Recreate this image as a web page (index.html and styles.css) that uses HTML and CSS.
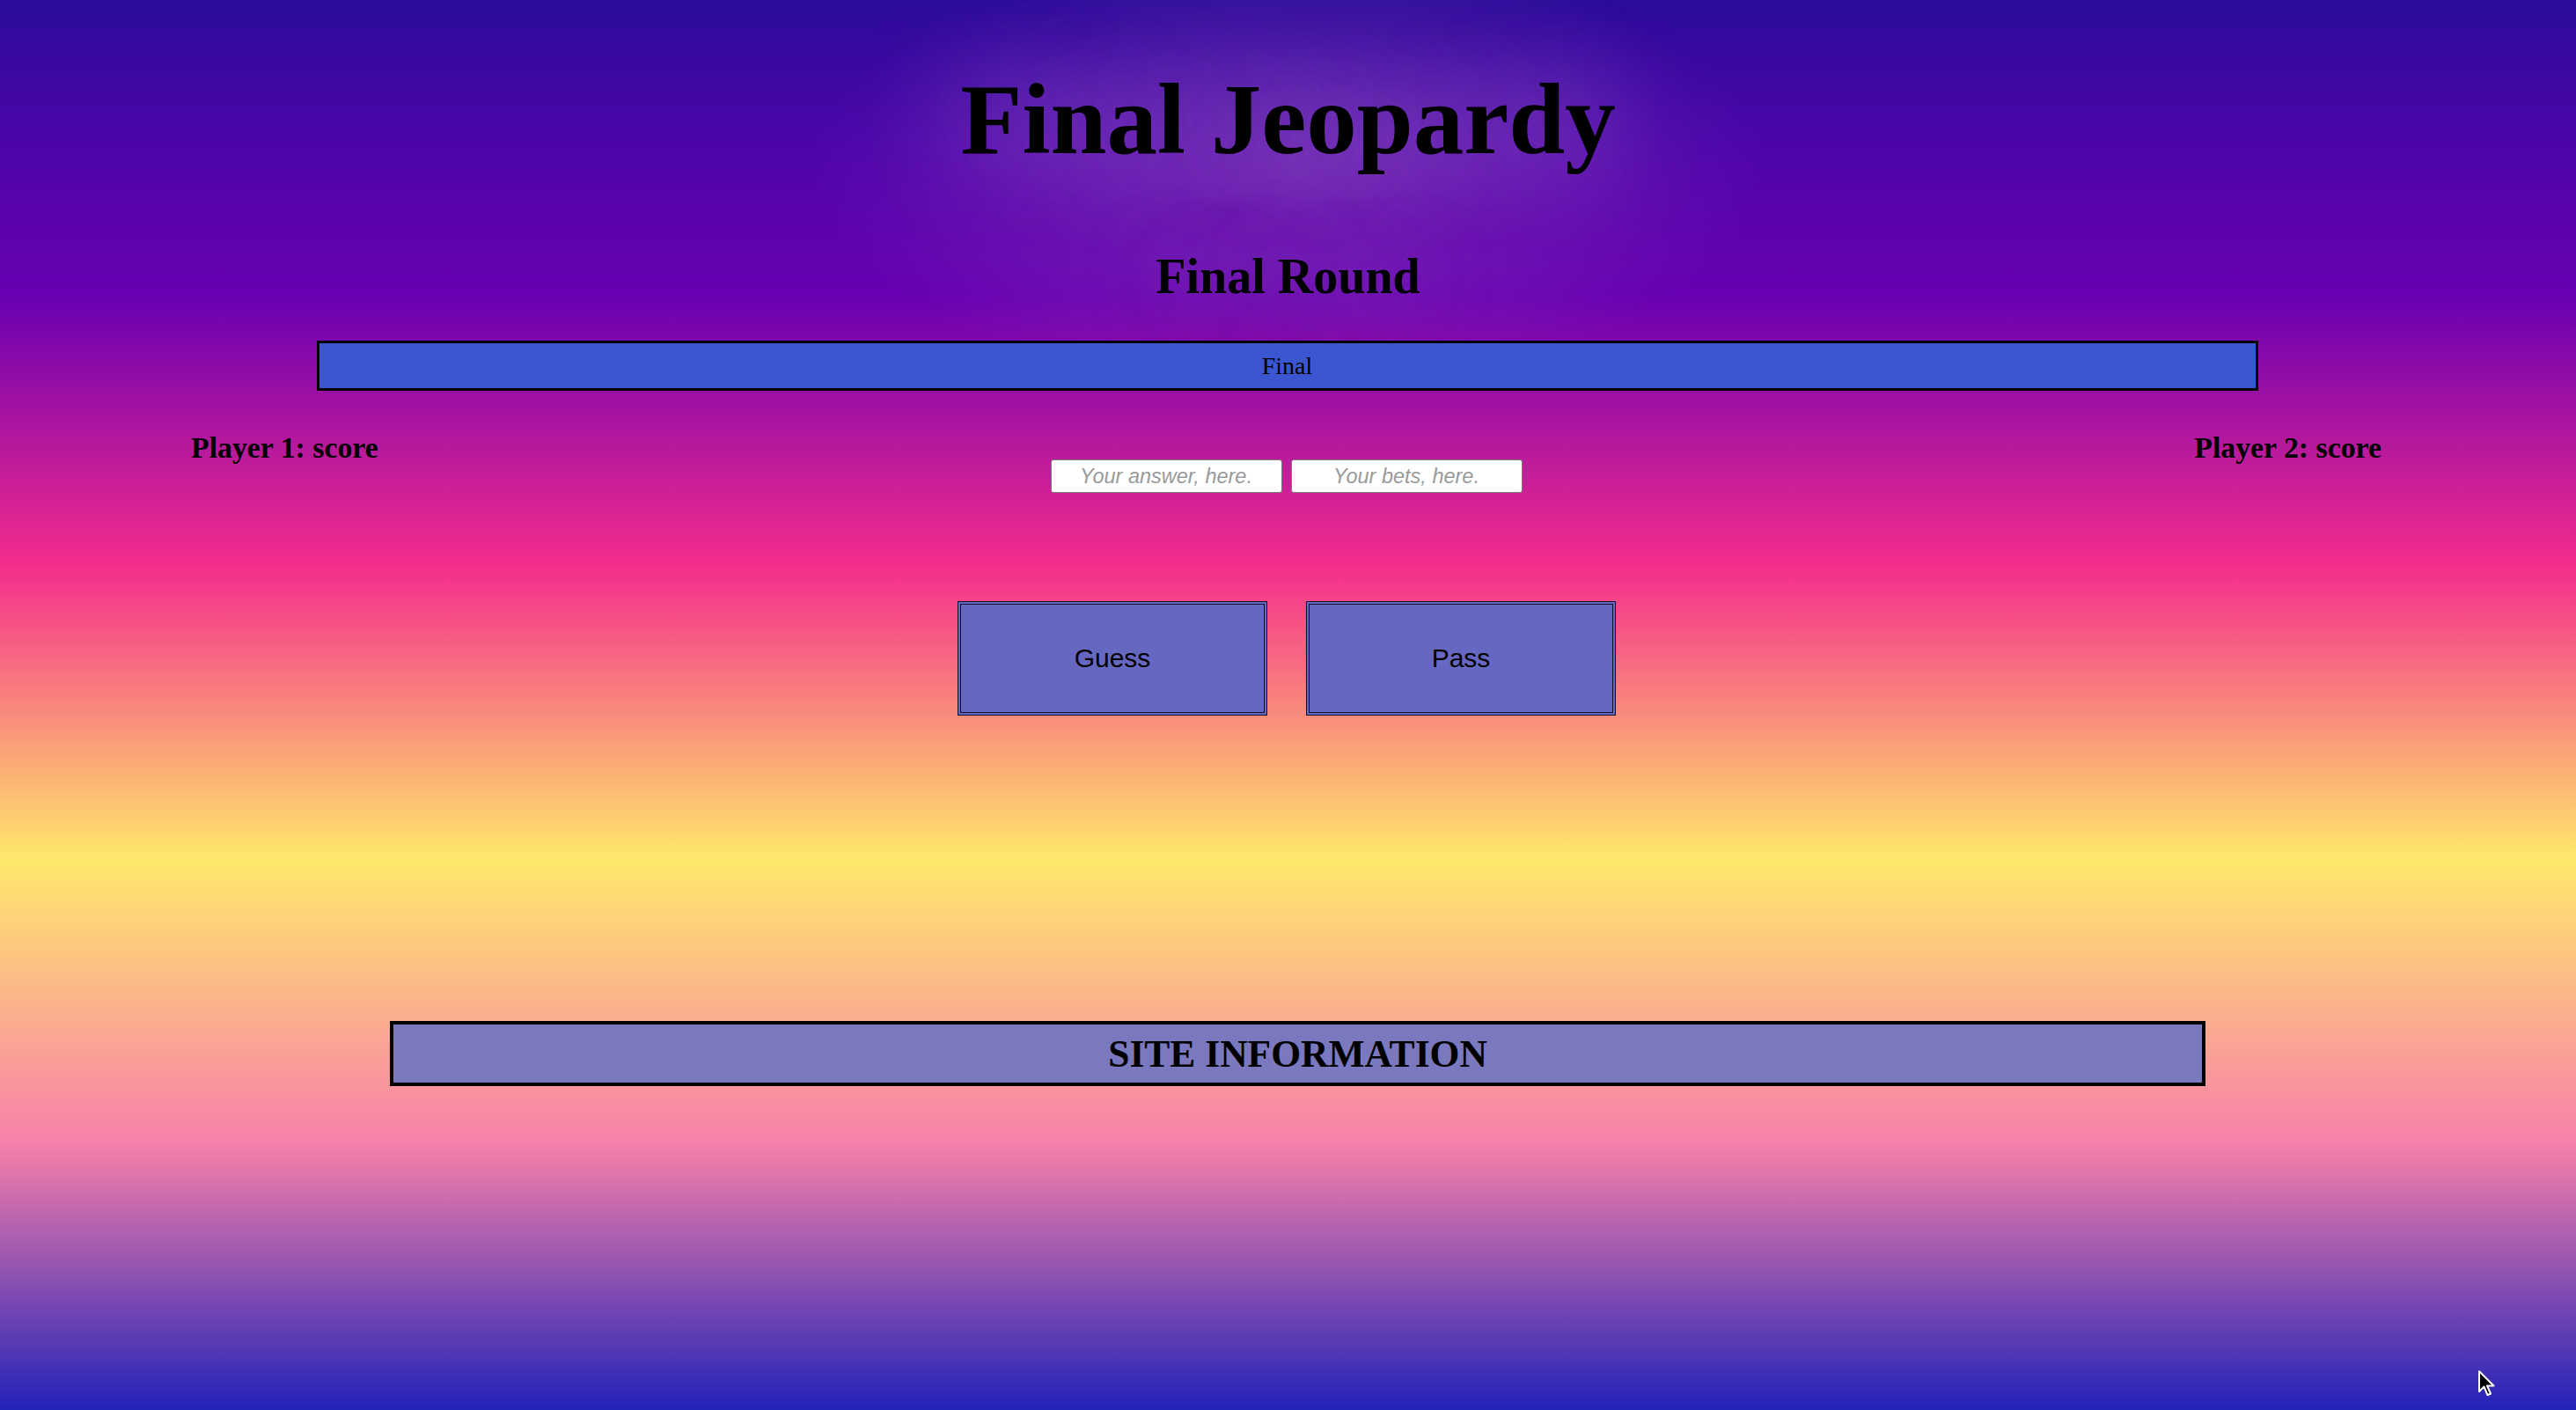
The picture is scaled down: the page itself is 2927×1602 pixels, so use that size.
FILE: index.html
```html
<!DOCTYPE html>
<html lang="en">
<head>
<meta charset="utf-8">
<title>Final Jeopardy</title>
<link rel="stylesheet" href="styles.css">
</head>
<body>
<main class="page">
  <h1 class="title">Final Jeopardy</h1>
  <h2 class="round">Final Round</h2>
  <div class="category">Final</div>
  <div class="play-row">
    <h3 class="player">Player 1: score</h3>
    <div class="inputs">
      <input class="field" type="text" placeholder="Your answer, here.">
      <input class="field" type="text" placeholder="Your bets, here.">
    </div>
    <h3 class="player">Player 2: score</h3>
  </div>
  <div class="actions">
    <button class="action" type="button">Guess</button>
    <button class="action" type="button">Pass</button>
  </div>
  <footer class="site-info">SITE INFORMATION</footer>
</main>
<svg class="cursor" width="22" height="32" viewBox="0 0 22 32" aria-hidden="true">
  <path d="M2 2 L2 25 L7.5 19.5 L11.5 29 L15 27.5 L11 18.5 L18.5 18.5 Z" fill="#000" stroke="#fff" stroke-width="2" stroke-linejoin="round"/>
</svg>
</body>
</html>
```
FILE: styles.css
```css
html, body {
  margin: 0;
  padding: 0;
}
body {
  width: 2927px;
  height: 1602px;
  overflow: hidden;
  position: relative;
  font-family: "Liberation Serif", "Times New Roman", serif;
  color: #000;
  background:
    radial-gradient(ellipse 540px 250px at 50% 190px,
      rgba(150, 90, 190, 0.42) 0%,
      rgba(150, 90, 190, 0.22) 50%,
      rgba(150, 90, 190, 0) 100%),
    linear-gradient(180deg,
      #2b0c9a 0%,
      #4c05aa 10%,
      #6800b2 21%,
      #f42c8c 40%,
      #ffe86c 61%,
      #f880aa 81%,
      #2222b8 100%);
}
.page {
  display: flex;
  flex-direction: column;
  align-items: center;
}
.title {
  margin: 79px 0 0;
  font-size: 115px;
  line-height: 114px;
  font-weight: bold;
  text-shadow: 0 0 110px rgba(190, 130, 220, 0.7);
}
.round {
  margin: 93px 0 0;
  font-size: 56px;
  line-height: 56px;
  font-weight: bold;
  text-shadow: 0 0 80px rgba(190, 130, 220, 0.5);
}
.category {
  margin-top: 45px;
  width: 2200px;
  height: 51px;
  box-sizing: content-box;
  border: 3px solid #000;
  margin-left: -2px;
  background: #3a56d0;
  font-size: 28px;
  line-height: 51px;
  text-align: center;
}
.play-row {
  align-self: stretch;
  display: flex;
  justify-content: space-between;
  align-items: flex-start;
  padding: 0 221px 0 217px;
  margin-top: 48px;
}
.player {
  margin: 0;
  font-size: 33.8px;
  line-height: 34px;
  font-weight: bold;
}
.inputs {
  display: flex;
  gap: 10px;
  margin-top: 30px;
}
.field {
  width: 263px;
  height: 38px;
  box-sizing: border-box;
  margin: 0;
  padding: 0 4px;
  border: 1px solid #7a7a7a;
  border-radius: 3px;
  background: #fff;
  font-family: "Liberation Sans", Arial, sans-serif;
  font-size: 23.5px;
  text-align: center;
}
.field::placeholder {
  color: #9a9a9a;
  font-style: italic;
}
.actions {
  display: flex;
  gap: 44px;
  margin-top: 123px;
  margin-right: 3px;
}
.action {
  width: 352px;
  height: 130px;
  box-sizing: border-box;
  margin: 0;
  padding: 0;
  border: 4px double #10102c;
  background: #6667c1;
  font-family: "Liberation Sans", Arial, sans-serif;
  font-size: 30px;
  color: #000;
}
.site-info {
  margin: 347px 0 0 22px;
  width: 2055px;
  height: 66px;
  border: 4px solid #000;
  background: #7a78be;
  font-size: 43.5px;
  line-height: 66px;
  font-weight: bold;
  text-align: center;
}
.cursor {
  position: absolute;
  left: 2815px;
  top: 1556px;
}
```
